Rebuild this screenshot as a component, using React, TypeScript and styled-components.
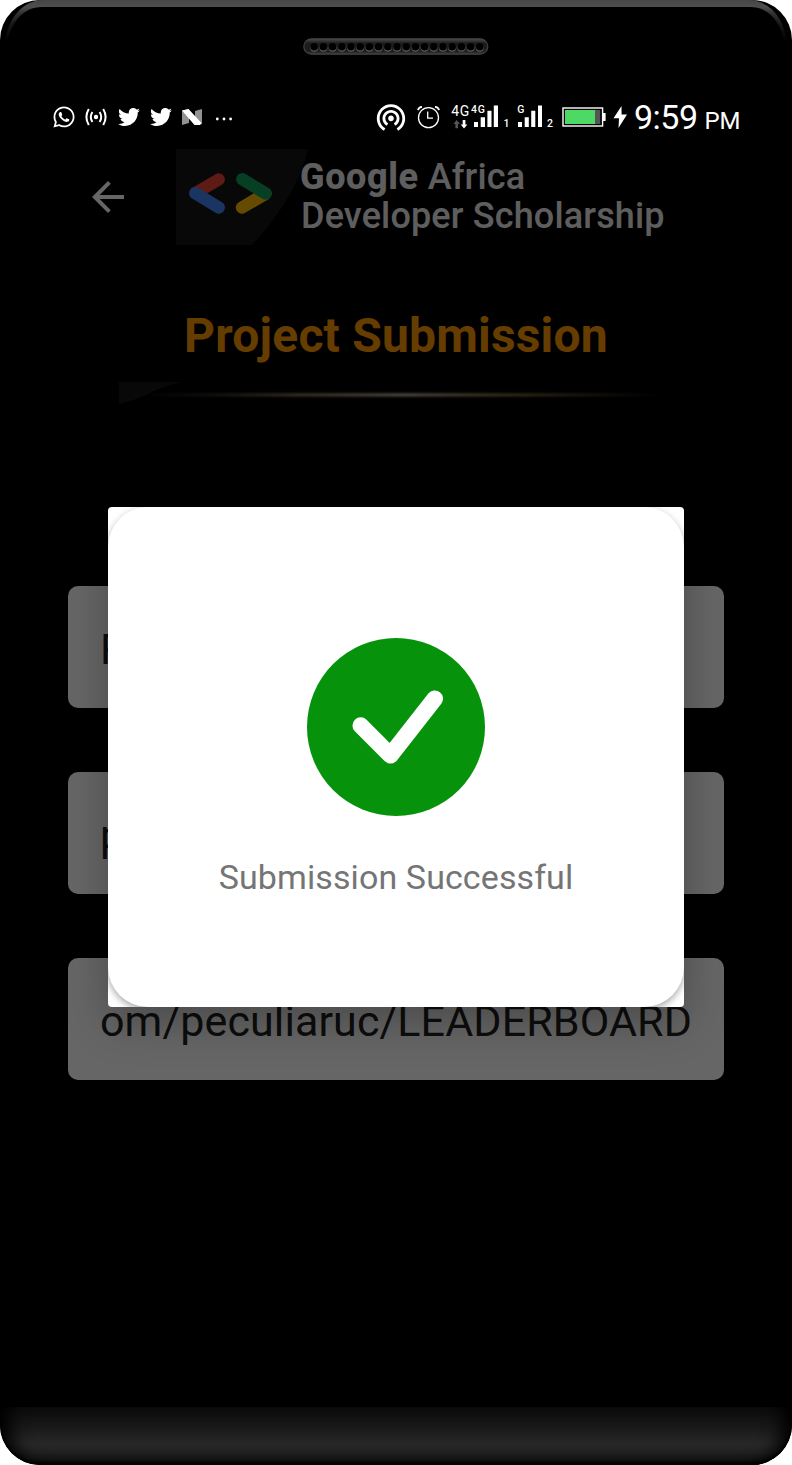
import React from 'react';
import styled, { createGlobalStyle } from 'styled-components';
import { FaWhatsapp, FaTwitter } from 'react-icons/fa';
import { MdArrowBack, MdWifiTethering } from 'react-icons/md';

const GlobalStyle = createGlobalStyle`
  body {
    margin: 0;
    background: #fff;
    font-family: Roboto, "Liberation Sans", sans-serif;
  }
  svg { display: block; flex: none; }
`;

const Phone = styled.div`
  position: relative;
  display: flex;
  flex-direction: column;
  width: 792px;
  height: 1465px;
  background: #000;
  border-radius: 40px;
  overflow: hidden;
`;

const TopBezel = styled.div`
  display: flex;
  justify-content: center;
  height: 95px;
`;

const BottomBezel = styled.div`
  height: 58px;
  border-radius: 0 0 40px 40px;
  background: linear-gradient(#0c0c0c 0, #161616 30%, #282828 64%, #222 76%, #161616 90%, #060606 100%);
  box-shadow: inset 22px 0 18px -12px #000, inset -22px 0 18px -12px #000, inset 0 -2px 3px #000;
`;

const StatusBar = styled.div`
  display: flex;
  align-items: center;
  height: 45px;
  padding-left: 52px;
  color: #fff;
`;

const StatusIcon = styled.span<{ $before?: number }>`
  display: flex;
  flex: none;
  margin-left: ${p => p.$before ?? 0}px;
  padding-bottom: 1px;
`;

const Time = styled.div`
  display: flex;
  align-items: baseline;
  margin-left: 6px;
  font-size: 34px;
  line-height: 45px;
  letter-spacing: -0.5px;
  padding-top: 3px;
  white-space: nowrap;
`;

const Meridiem = styled.span`
  margin-left: 7px;
  font-size: 24px;
  letter-spacing: -0.2px;
`;

const Screen = styled.main`
  position: relative;
  flex: 1;
  display: flex;
  flex-direction: column;
  overflow: hidden;
`;

const Header = styled.header`
  display: flex;
  align-items: center;
  height: 96px;
  margin-top: 9px;
  padding-left: 84px;
  color: #fff;
`;

const Logo = styled.svg`
  margin-left: 44px;
  overflow: visible;
`;

const Brand = styled.div`
  position: relative;
  align-self: flex-start;
  padding-top: 9px;
  color: #ececec;
  font-size: 36px;
  line-height: 39px;
  font-weight: 500;
  white-space: nowrap;
`;

const BrandLine = styled.div<{ $indent?: number }>`
  padding-left: ${p => p.$indent ?? 0}px;
  letter-spacing: 0.15px;
`;

const BrandName = styled.span`
  font-weight: 800;
  letter-spacing: 0.6px;
`;

const Title = styled.h1`
  margin: 63px 0 0;
  color: #ff9900;
  font-size: 48px;
  line-height: 56px;
  font-weight: 700;
  letter-spacing: 0.2px;
  text-align: center;
`;

const Divider = styled.svg`
  margin: 18px 0 0 119px;
`;

const Form = styled.div`
  display: flex;
  flex-direction: column;
  gap: 64px;
  padding: 180px 68px 0;
`;

const Field = styled.div`
  height: 122px;
  padding: 0 32px;
  box-sizing: border-box;
  border-radius: 10px;
  background: #fff;
  color: #212121;
  font-size: 43px;
  line-height: 126px;
  letter-spacing: 0.1px;
  white-space: nowrap;
`;

const Scrim = styled.div`
  position: absolute;
  inset: 0;
  background: rgba(0, 0, 0, 0.6);
`;

const Dialog = styled.div`
  position: absolute;
  top: 367px;
  left: 108px;
  width: 576px;
  height: 500px;
  border-radius: 4px;
  background: #fff;
  box-shadow: 0 14px 44px rgba(0, 0, 0, 0.28);
`;

const DialogClip = styled.div`
  height: 100%;
  border-radius: 4px;
  overflow: hidden;
`;

const Card = styled.div`
  display: flex;
  flex-direction: column;
  align-items: center;
  height: 500px;
  padding-top: 130px;
  box-sizing: border-box;
  border-radius: 40px;
  background: #fff;
  box-shadow: 0 3px 7px rgba(0, 0, 0, 0.34);
`;

const Message = styled.p`
  margin: 38px 0 0;
  color: #757575;
  font-size: 34px;
  line-height: 44px;
  letter-spacing: 0.1px;
  white-space: nowrap;
`;

const RimSvg = styled.svg`
  position: absolute;
  top: 0;
  left: 0;
`;

function Rim() {
  return (
    <RimSvg width="792" height="46" viewBox="0 0 792 46">
      <defs>
        <linearGradient id="rim" x1="0" y1="0" x2="0" y2="46" gradientUnits="userSpaceOnUse">
          <stop offset="0" stopColor="#464646" />
          <stop offset="0.15" stopColor="#4e4e4e" />
          <stop offset="0.3" stopColor="#303030" />
          <stop offset="0.55" stopColor="#161616" />
          <stop offset="0.9" stopColor="#000" />
        </linearGradient>
      </defs>
      <path fill="url(#rim)" d="M5 44C7 20 20 3 40 0H752C772 3 785 20 787 44H785C781 22 769 7 750 7H42C23 7 11 22 7 44Z" />
    </RimSvg>
  );
}

const SpeakerSvg = styled.svg`
  margin-top: 38px;
`;

function Speaker() {
  return (
    <SpeakerSvg width="186" height="17" viewBox="0 0 186 17">
      <defs>
        <linearGradient id="grille" x1="0" y1="0" x2="0" y2="1">
          <stop offset="0" stopColor="#4a4a4a" />
          <stop offset="0.3" stopColor="#1c1c1c" />
          <stop offset="0.8" stopColor="#1c1c1c" />
          <stop offset="1" stopColor="#3c3c3c" />
        </linearGradient>
      </defs>
      <rect x="0.8" y="0.8" width="184" height="15.4" rx="7.7" fill="url(#grille)" stroke="#414141" strokeWidth="1.2" />
      {Array.from({ length: 19 }, (_, i) => (
        <g key={i}>
          <circle cx={11.2 + i * 9.2} cy="9.7" r="4" fill="#5c5c5c" />
          <circle cx={11.2 + i * 9.2} cy="8.7" r="3.8" fill="#000" />
        </g>
      ))}
    </SpeakerSvg>
  );
}

function Broadcast() {
  return (
    <svg width="22" height="18" viewBox="0 0 22 18" fill="none" stroke="#fff" strokeWidth="2">
      <circle cx="11" cy="9" r="2.2" fill="#fff" stroke="none" />
      <path d="M7.4 4Q4.2 9 7.4 14M14.6 4Q17.8 9 14.6 14M3.8 1Q-1 9 3.8 17M18.2 1Q23 9 18.2 17" />
    </svg>
  );
}

function Nougat() {
  return (
    <svg width="20" height="16" viewBox="0 0 20 16">
      <path fill="#929292" d="M0 1.5L7 0V14L0 16ZM13 2L20 0V15L13 16Z" />
      <path fill="#fff" d="M0 1.5L6.5 0L19.5 14L18 16H12.5Z" />
    </svg>
  );
}

function Alarm() {
  return (
    <svg width="23" height="24" viewBox="0 0 23 24" fill="none" stroke="#fff" strokeWidth="1.3">
      <circle cx="11.5" cy="12.7" r="10" />
      <path d="M10.7 6.5V13.2H16" />
      <path strokeWidth="1.8" d="M1 5.2Q1.5 2 5 1.8M18 1.8Q21.5 2 22 5.2" />
    </svg>
  );
}

function Cellular() {
  return (
    <svg width="104" height="32" viewBox="450 101 104 32" fill="#fff">
      <text x="451.3" y="116" fontSize="14" textLength="18">4G</text>
      <text x="471" y="113.4" fontSize="10.5" fontWeight="500" textLength="14">4G</text>
      <path fill="#555" d="M456.7 120L460 124H458V128.3H455.4V124H453.4Z" />
      <path d="M464 128.5L467.4 124.4H465.4V120H462.7V124.4H460.7Z" />
      <path d="M474 122H478V127H474ZM480.7 117.2H485V127H480.7ZM487.4 110.8H491.5V127H487.4ZM493.8 105.4H498V127H493.8Z" />
      <text x="503.5" y="127" fontSize="10.5" fontWeight="500">1</text>
      <text x="517.2" y="113.4" fontSize="10.5" fontWeight="500">G</text>
      <path d="M518 122H522V127H518ZM524.7 117.2H528.8V127H524.7ZM531.2 110.8H535.3V127H531.2ZM538 105.4H542V127H538Z" />
      <text x="547" y="127" fontSize="10.5" fontWeight="500">2</text>
    </svg>
  );
}

function Battery() {
  return (
    <svg width="44" height="20" viewBox="0 0 44 20">
      <rect x="1" y="1" width="39.6" height="18" fill="#000" stroke="#fff" strokeWidth="1.4" />
      <rect x="3" y="3" width="30" height="14" fill="#4cd964" />
      <rect x="33" y="3" width="5.2" height="14" fill="#555" />
      <rect x="40" y="6" width="3.6" height="8" fill="#fff" />
    </svg>
  );
}

export default function App() {
  return (
    <>
      <GlobalStyle />
      <Phone>
        <Rim />
        <TopBezel><Speaker /></TopBezel>
        <StatusBar>
          <StatusIcon><FaWhatsapp size={24} /></StatusIcon>
          <StatusIcon $before={9}><Broadcast /></StatusIcon>
          <StatusIcon $before={11}><FaTwitter size={22} /></StatusIcon>
          <StatusIcon $before={10}><FaTwitter size={22} /></StatusIcon>
          <StatusIcon $before={10}><Nougat /></StatusIcon>
          <StatusIcon $before={13}>
            <svg width="18" height="8" viewBox="0 0 18 8" fill="#fff">
              <circle cx="2.3" cy="6" r="1.4" />
              <circle cx="9" cy="6" r="1.4" />
              <circle cx="15.6" cy="6" r="1.4" />
            </svg>
          </StatusIcon>
          <StatusIcon $before={141}><MdWifiTethering size={34} /></StatusIcon>
          <StatusIcon $before={9}><Alarm /></StatusIcon>
          <StatusIcon $before={10}><Cellular /></StatusIcon>
          <StatusIcon $before={8}><Battery /></StatusIcon>
          <StatusIcon $before={7}>
            <svg width="15" height="22" viewBox="0 0 15 22" fill="#fff">
              <path d="M8.5 0L0.5 12.2H6L5.5 22L14 8.6H8.6Z" />
            </svg>
          </StatusIcon>
          <Time>9:59<Meridiem>PM</Meridiem></Time>
        </StatusBar>
        <Screen>
          <Header>
            <MdArrowBack size={48} />
            <Logo width="124" height="96" viewBox="176 149 124 96">
              <path fill="#161616" d="M176 149H308Q296 198 252 245H176Z" />
              <g strokeWidth="12.4" strokeLinecap="round">
                <path stroke="#ea4335" d="M218.7 179.5L195.5 193" />
                <path stroke="#4285f4" d="M195.3 193.3L218.8 207.5" />
                <path stroke="#fbbc04" d="M242 207.5L265.4 193.8" />
                <path stroke="#0f9d58" d="M242.3 179.3L265.6 193.4" />
              </g>
            </Logo>
            <Brand>
              <BrandLine><BrandName>Google</BrandName> Africa</BrandLine>
              <BrandLine $indent={1}>Developer Scholarship</BrandLine>
            </Brand>
          </Header>
          <Title>Project Submission</Title>
          <Divider width="546" height="24" viewBox="0 0 546 24">
            <defs>
              <linearGradient id="beam">
                <stop offset="0" stopColor="#b8a888" stopOpacity="0" />
                <stop offset="0.12" stopColor="#9c8a6a" stopOpacity="0.25" />
                <stop offset="0.3" stopColor="#a89470" stopOpacity="0.75" />
                <stop offset="0.5" stopColor="#b4aa98" />
                <stop offset="0.72" stopColor="#a08458" stopOpacity="0.7" />
                <stop offset="1" stopColor="#a08458" stopOpacity="0" />
              </linearGradient>
              <filter id="glow" x="-5%" y="-300%" width="110%" height="700%">
                <feGaussianBlur stdDeviation="0 1" />
              </filter>
            </defs>
            <path fill="#161616" d="M0 0H63Q46 4 35 9Q18 18 0 22Z" />
            <rect x="26" y="11.2" width="516" height="3.4" fill="url(#beam)" filter="url(#glow)" />
          </Divider>
          <Form>
            <Field>P</Field>
            <Field>p</Field>
            <Field>om/peculiaruc/LEADERBOARD</Field>
          </Form>
          <Scrim />
          <Dialog>
            <DialogClip>
              <Card>
                <svg width="180" height="180" viewBox="0 0 180 180">
                  <circle cx="90" cy="90" r="89" fill="#06930b" />
                  <path d="M54.7 88.5L84.4 118.3L128.8 61.7" fill="none" stroke="#fff" strokeWidth="16.5" strokeLinecap="round" strokeLinejoin="round" />
                </svg>
                <Message>Submission Successful</Message>
              </Card>
            </DialogClip>
          </Dialog>
        </Screen>
        <BottomBezel />
      </Phone>
    </>
  );
}
